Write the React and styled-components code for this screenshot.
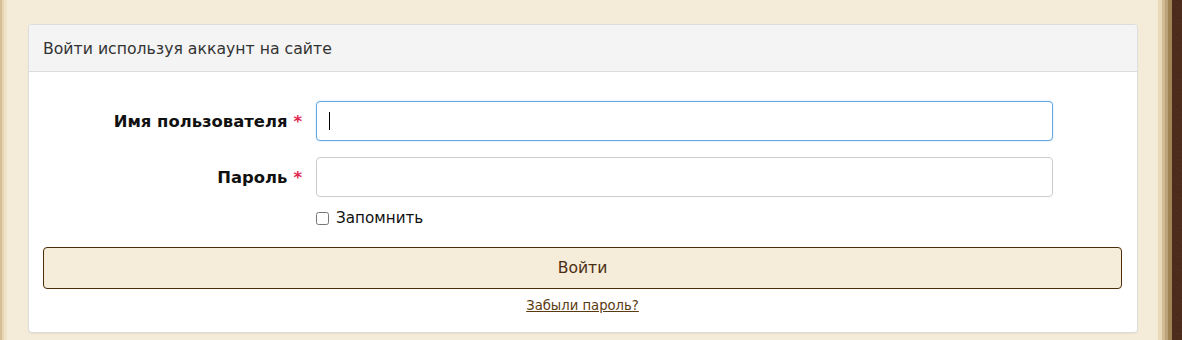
import React from "react";
import styled, { createGlobalStyle } from "styled-components";

const Global = createGlobalStyle`
  html, body { margin: 0; padding: 0; }
  body {
    background: #f4ebd9;
    font-family: "DejaVu Sans", Verdana, sans-serif;
    color: #333;
  }
`;

const Frame = styled.div`
  display: flex;
  width: 1182px;
  height: 340px;
  overflow: hidden;
  background: #f4ebd9;
`;

const LeftEdge = styled.div`
  flex: 0 0 7px;
  background: linear-gradient(
    to right,
    #d6bf96 0px, #d6bf96 2px,
    #e6d5b3 2px, #e6d5b3 4px,
    #efe3c9 4px, #efe3c9 7px
  );
`;

const RightEdge = styled.div`
  flex: 0 0 24px;
  background:
    repeating-linear-gradient(45deg, rgba(0,0,0,0.08) 0 1px, transparent 1px 3px) 14px 0 / 10px 100% no-repeat,
    linear-gradient(
      to right,
      #e9d9b9 0px, #e9d9b9 4px,
      #d2bb92 4px, #d2bb92 7px,
      #bca27a 7px, #bca27a 10px,
      #a08454 10px, #a08454 14px,
      #4f2d1d 14px, #4f2d1d 24px
    );
`;

const Main = styled.main`
  flex: 1;
  padding: 24px 20px 0 21px;
`;

const Card = styled.section`
  background: #fff;
  border: 1px solid #ddd;
  border-radius: 4px;
  box-shadow: 0 1px 1px rgba(0, 0, 0, 0.05);
  overflow: hidden;
`;

const CardHeader = styled.header`
  height: 46px;
  display: flex;
  align-items: center;
  padding: 0 14px;
  background: #f4f4f4;
  border-bottom: 1px solid #ddd;
  font-size: 15.7px;
  color: #333;
`;

const CardBody = styled.div`
  padding: 29px 15px 18px 14px;
`;

const Form = styled.form`
  display: grid;
  grid-template-columns: 259px 737px;
  column-gap: 14px;
  row-gap: 16px;
  align-items: center;
`;

const Label = styled.label`
  justify-self: end;
  font-size: 16.4px;
  font-weight: bold;
  color: #111;
`;

const Required = styled.span`
  color: #e0284f;
  margin-left: 6px;
`;

const InputWrap = styled.div`
  position: relative;
`;

const TextInput = styled.input`
  display: block;
  box-sizing: border-box;
  width: 100%;
  height: 40px;
  padding: 6px 12px;
  font-family: inherit;
  font-size: 15px;
  background: #fff;
  border: 1px solid ${(p) => (p.$focused ? "#62a9e6" : "#ccc")};
  border-radius: 4px;
  outline: none;
  box-shadow: ${(p) => (p.$focused ? "0 0 2px rgba(102,175,233,0.4)" : "none")};
`;

const Caret = styled.span`
  position: absolute;
  left: 13px;
  top: 11px;
  width: 1px;
  height: 18px;
  background: #000;
`;

const CheckRow = styled.div`
  grid-column: 2;
  margin-top: -5px;
  display: flex;
  align-items: center;
  gap: 7px;
  height: 20px;
  font-size: 15.2px;
  color: #111;
`;

const Check = styled.input`
  margin: 0;
  width: 13px;
  height: 13px;
`;

const SubmitButton = styled.button`
  display: block;
  box-sizing: border-box;
  width: 100%;
  height: 42px;
  margin-top: 19px;
  background: #f5ecd9;
  border: 1px solid #4d2c06;
  border-radius: 4px;
  font-family: inherit;
  font-size: 15.6px;
  color: #4a2e12;
  cursor: pointer;
`;

const Forgot = styled.a`
  display: block;
  margin-top: 9px;
  line-height: 16px;
  text-align: center;
  font-size: 13.2px;
  color: #5a3a10;
  text-decoration: underline;
`;

export default function App() {
  return (
    <>
      <Global />
      <Frame>
        <LeftEdge />
        <Main>
          <Card>
            <CardHeader>Войти используя аккаунт на сайте</CardHeader>
            <CardBody>
              <Form onSubmit={(e) => e.preventDefault()}>
                <Label htmlFor="user">
                  Имя пользователя<Required>*</Required>
                </Label>
                <InputWrap>
                  <TextInput id="user" type="text" $focused />
                  <Caret />
                </InputWrap>
                <Label htmlFor="pass">
                  Пароль<Required>*</Required>
                </Label>
                <InputWrap>
                  <TextInput id="pass" type="password" />
                </InputWrap>
                <CheckRow>
                  <Check type="checkbox" id="remember" />
                  <label htmlFor="remember">Запомнить</label>
                </CheckRow>
              </Form>
              <SubmitButton type="submit">Войти</SubmitButton>
              <Forgot href="#">Забыли пароль?</Forgot>
            </CardBody>
          </Card>
        </Main>
        <RightEdge />
      </Frame>
    </>
  );
}
